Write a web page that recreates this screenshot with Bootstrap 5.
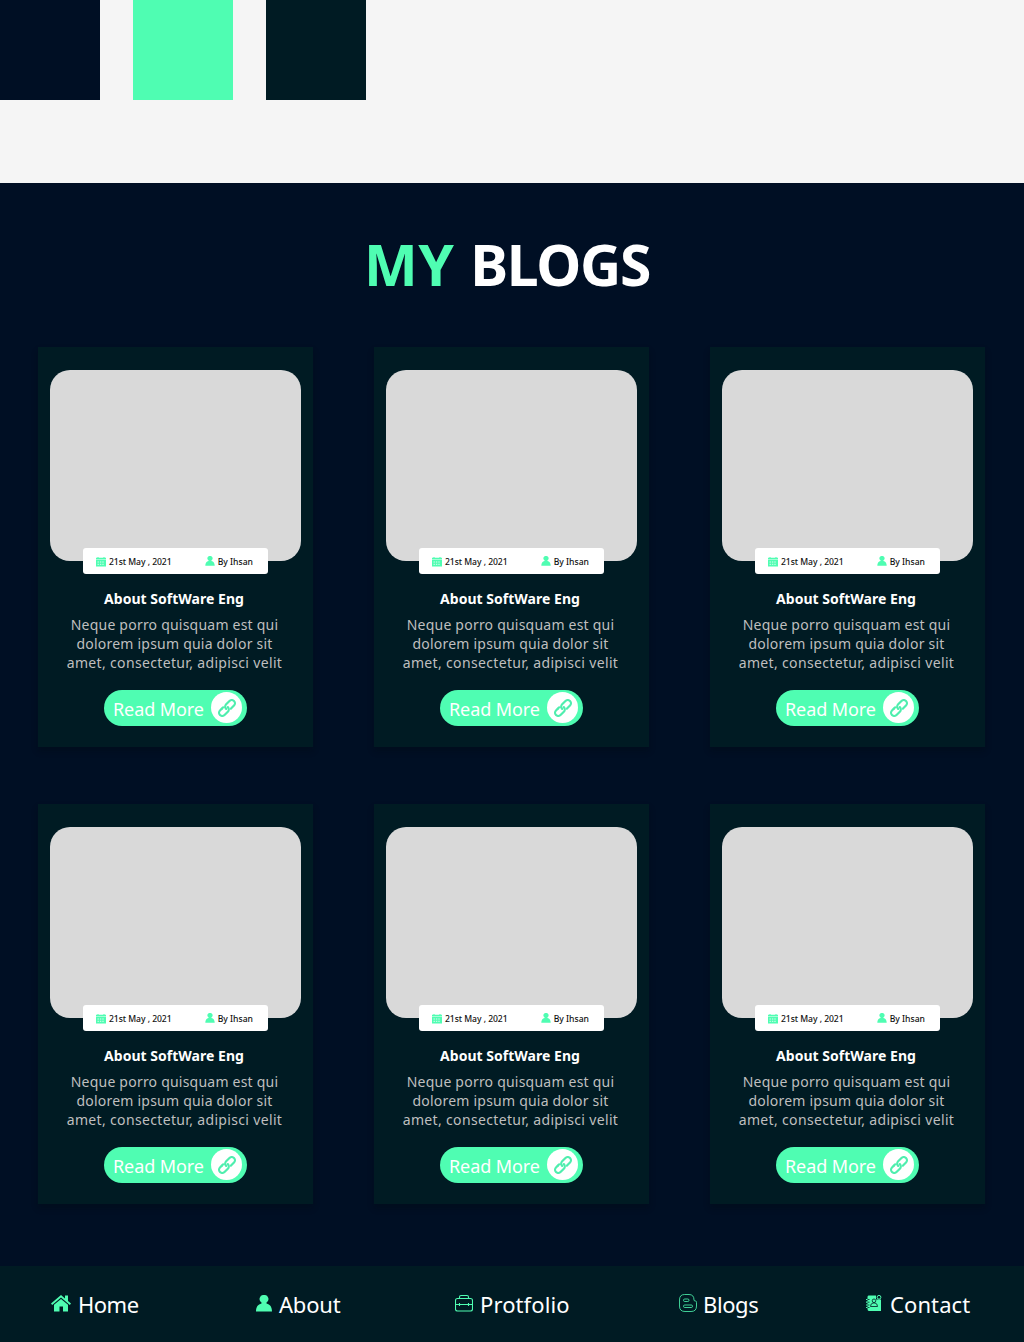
<!DOCTYPE html>
<html lang="en">
<head>
<meta charset="utf-8">
<meta name="viewport" content="width=device-width, initial-scale=1">
<title>My Blogs</title>
<link href="https://cdn.jsdelivr.net/npm/bootstrap@5.3.0/dist/css/bootstrap.min.css" rel="stylesheet">
<style>
:root{--navy:#000f24;--mint:#4ffdb2;--deep:#001b23}
body{background:#f5f5f5;font-family:"Noto Sans","Open Sans",sans-serif;width:1024px;overflow-x:hidden}
.swatches{height:183px;gap:33px}
.swatch{width:100px;height:100px}
.bg-navy{background:var(--navy)}.bg-mint{background:var(--mint)}.bg-deep{background:var(--deep)}
.mint{color:var(--mint);letter-spacing:.7px}
.blogs{height:1083px;padding:0 38px}
.blogs-title{height:164px;padding-top:41px;font-size:57px;line-height:80px;font-weight:700;letter-spacing:-1.300px;margin:0;padding-right:10px;white-space:nowrap}
.blog-grid{display:grid;grid-template-columns:repeat(3,275px);gap:57px 61px}
.blog{height:400px;background:var(--deep);padding-top:23px;box-shadow:0 4px 6px rgba(0,10,16,.3)}
.thumb{width:251px;height:191px;border-radius:20px;background:#d9d9d9}
.meta{width:185px;height:26px;margin-top:-13px;border-radius:3px;background:#fff;color:#111;font-size:8.6px;font-weight:500;padding:2px 15px 0 13px;line-height:24px;position:relative;white-space:nowrap}
.meta svg{width:10px;height:10px;margin-right:3px}
.date{letter-spacing:-.05px}
.meta .icon-up{margin-top:-2px}
.blog-name{font-size:14px;line-height:20px;font-weight:700;color:#fff;margin:15px 0 6px;padding-right:3px;letter-spacing:.02px;white-space:nowrap}
.blog-text{font-size:14px;line-height:19px;color:#bfbfbf;margin:0 0 18px;padding-right:2px;letter-spacing:.34px;white-space:nowrap}
.blog-text .l1{letter-spacing:.22px}
.more{width:143px;height:36px;border-radius:18px;background:var(--mint);color:#fff;font-size:18px;padding:0 5px 0 9px;text-decoration:none;letter-spacing:-.1px;white-space:nowrap}
.more span{line-height:36px;padding-top:2px}
.disc{width:31px;height:31px;border-radius:50%;background:#fff;margin-top:-1px}
.footer-nav{height:76px;font-size:22px;padding-left:51px}
.footer-nav a{color:#fff;text-decoration:none;line-height:30px;white-space:nowrap;gap:7px;flex:none}
.footer-nav svg{flex:none;margin-top:-2px}
.to-home{width:205px;letter-spacing:-.5px}.to-about{width:199px;letter-spacing:-.2px}.to-work{width:224px;letter-spacing:.1px}.to-blogs{width:187px;letter-spacing:-.4px}
.footer-nav .to-blogs{gap:6px}
.footer-nav .to-contact{gap:8px;letter-spacing:.1px}
</style>
</head>
<body>
<svg width="0" height="0" class="position-absolute" aria-hidden="true">
<symbol id="cal" viewBox="0 0 10 10"><path fill="#4ffdb2" d="M0 .8h1.500V0h1v.8h5V0h1v.8H10v1.700H0zM0 3h10v6.500H0z"/><path stroke="#fff" stroke-width=".8" stroke-dasharray="1.400 1" d="M1.500 5h7M1.500 7.300h7"/></symbol>
<symbol id="user" viewBox="0 0 16 17"><path fill="#4ffdb2" d="M8 0a4 4 0 0 1 2.500 7.400v1.100C14 9.300 16 12 16 16.500H0C0 12 2 9.300 5.500 8.500V7.400A4 4 0 0 1 8 0z"/></symbol>
<symbol id="chain" viewBox="0 0 18 18"><g fill="none" stroke="#4feeae" stroke-width="2.200" stroke-linecap="round" transform="rotate(-45 9 9)"><path d="M4.800 5.800H2.300a3.200 3.200 0 0 0 0 6.400h4.700a3.200 3.200 0 0 0 3.200-3.200"/><path d="M13.200 12.200h2.500a3.200 3.200 0 0 0 0-6.400h-4.700A3.200 3.200 0 0 0 7.800 9M4.800 5.800h2M11.200 12.200h2"/></g></symbol>
</svg>
<div class="swatches d-flex"><div class="swatch bg-navy"></div><div class="swatch bg-mint"></div><div class="swatch bg-deep"></div></div>
<main class="blogs bg-navy">
<h1 class="blogs-title text-center text-white"><span class="mint">MY </span>BLOGS</h1>
<div class="blog-grid">
<article class="blog d-flex flex-column align-items-center"><div class="thumb"></div><div class="meta d-flex justify-content-between"><span class="d-flex align-items-center"><svg><use href="#cal"/></svg><span class="date">21st May , 2021</span></span><span class="d-flex align-items-center"><svg class="icon-up"><use href="#user"/></svg><span class="author">By Ihsan</span></span></div><h2 class="blog-name">About SoftWare Eng</h2><p class="blog-text text-center"><span class="l1">Neque porro quisquam est qui</span><br><span class="l1">dolorem ipsum quia dolor sit</span><br>amet, consectetur, adipisci velit</p><a href="#" class="more d-flex align-items-center justify-content-between"><span>Read More</span><i class="disc d-flex align-items-center justify-content-center"><svg width="18" height="18"><use href="#chain"/></svg></i></a></article>
<article class="blog d-flex flex-column align-items-center"><div class="thumb"></div><div class="meta d-flex justify-content-between"><span class="d-flex align-items-center"><svg><use href="#cal"/></svg><span class="date">21st May , 2021</span></span><span class="d-flex align-items-center"><svg class="icon-up"><use href="#user"/></svg><span class="author">By Ihsan</span></span></div><h2 class="blog-name">About SoftWare Eng</h2><p class="blog-text text-center"><span class="l1">Neque porro quisquam est qui</span><br><span class="l1">dolorem ipsum quia dolor sit</span><br>amet, consectetur, adipisci velit</p><a href="#" class="more d-flex align-items-center justify-content-between"><span>Read More</span><i class="disc d-flex align-items-center justify-content-center"><svg width="18" height="18"><use href="#chain"/></svg></i></a></article>
<article class="blog d-flex flex-column align-items-center"><div class="thumb"></div><div class="meta d-flex justify-content-between"><span class="d-flex align-items-center"><svg><use href="#cal"/></svg><span class="date">21st May , 2021</span></span><span class="d-flex align-items-center"><svg class="icon-up"><use href="#user"/></svg><span class="author">By Ihsan</span></span></div><h2 class="blog-name">About SoftWare Eng</h2><p class="blog-text text-center"><span class="l1">Neque porro quisquam est qui</span><br><span class="l1">dolorem ipsum quia dolor sit</span><br>amet, consectetur, adipisci velit</p><a href="#" class="more d-flex align-items-center justify-content-between"><span>Read More</span><i class="disc d-flex align-items-center justify-content-center"><svg width="18" height="18"><use href="#chain"/></svg></i></a></article>
<article class="blog d-flex flex-column align-items-center"><div class="thumb"></div><div class="meta d-flex justify-content-between"><span class="d-flex align-items-center"><svg><use href="#cal"/></svg><span class="date">21st May , 2021</span></span><span class="d-flex align-items-center"><svg class="icon-up"><use href="#user"/></svg><span class="author">By Ihsan</span></span></div><h2 class="blog-name">About SoftWare Eng</h2><p class="blog-text text-center"><span class="l1">Neque porro quisquam est qui</span><br><span class="l1">dolorem ipsum quia dolor sit</span><br>amet, consectetur, adipisci velit</p><a href="#" class="more d-flex align-items-center justify-content-between"><span>Read More</span><i class="disc d-flex align-items-center justify-content-center"><svg width="18" height="18"><use href="#chain"/></svg></i></a></article>
<article class="blog d-flex flex-column align-items-center"><div class="thumb"></div><div class="meta d-flex justify-content-between"><span class="d-flex align-items-center"><svg><use href="#cal"/></svg><span class="date">21st May , 2021</span></span><span class="d-flex align-items-center"><svg class="icon-up"><use href="#user"/></svg><span class="author">By Ihsan</span></span></div><h2 class="blog-name">About SoftWare Eng</h2><p class="blog-text text-center"><span class="l1">Neque porro quisquam est qui</span><br><span class="l1">dolorem ipsum quia dolor sit</span><br>amet, consectetur, adipisci velit</p><a href="#" class="more d-flex align-items-center justify-content-between"><span>Read More</span><i class="disc d-flex align-items-center justify-content-center"><svg width="18" height="18"><use href="#chain"/></svg></i></a></article>
<article class="blog d-flex flex-column align-items-center"><div class="thumb"></div><div class="meta d-flex justify-content-between"><span class="d-flex align-items-center"><svg><use href="#cal"/></svg><span class="date">21st May , 2021</span></span><span class="d-flex align-items-center"><svg class="icon-up"><use href="#user"/></svg><span class="author">By Ihsan</span></span></div><h2 class="blog-name">About SoftWare Eng</h2><p class="blog-text text-center"><span class="l1">Neque porro quisquam est qui</span><br><span class="l1">dolorem ipsum quia dolor sit</span><br>amet, consectetur, adipisci velit</p><a href="#" class="more d-flex align-items-center justify-content-between"><span>Read More</span><i class="disc d-flex align-items-center justify-content-center"><svg width="18" height="18"><use href="#chain"/></svg></i></a></article>
</div>
</main>
<nav class="footer-nav bg-deep d-flex align-items-center">
<a href="#" class="to-home d-flex align-items-center"><svg width="20" height="17" viewBox="0 0 20 17"><path fill="#4ffdb2" d="M10 0l4 3.400V.4h3v5.600l3 2.600-1.200 1.300L10 2.500 1.200 9.900 0 8.600zM10 3.900l7 5.900V16.500h-5v-5H8.500v5H3V9.800z"/></svg><span>Home</span></a>
<a href="#" class="to-about d-flex align-items-center"><svg width="16" height="17"><use href="#user"/></svg><span>About</span></a>
<a href="#" class="to-work d-flex align-items-center"><svg width="18" height="18" viewBox="0 0 18 18"><g fill="none" stroke="#4ffdb2" stroke-width="1.100"><rect x=".5" y="4.500" width="17" height="12.500" rx="2"/><path d="M4.500 4.500V3q0-1.500 1.500-1.500h6q1.500 0 1.500 1.500v1.500M.5 10.500h17M4.500 9v3M13.500 9v3"/></g></svg><span>Protfolio</span></a>
<a href="#" class="to-blogs d-flex align-items-center"><svg width="18" height="18" viewBox="0 0 18 18"><g fill="none" stroke="#4ffdb2" stroke-width=".8"><path d="M5.500.5h4.500q5 0 5 5.500 0 1 1.500 1 1 0 1 1.500V12q0 5.500-5.500 5.500H6Q.5 17.500.5 12V6Q.5.5 5.500.5z"/><rect x="4.500" y="5" width="5.500" height="2.500" rx="1.200"/><rect x="4.500" y="11" width="9" height="2.500" rx="1.200"/></g></svg><span>Blogs</span></a>
<a href="#" class="to-contact d-flex align-items-center"><svg width="16" height="16" viewBox="0 0 16 16"><path fill="#4ffdb2" d="M2.500.5H10v4h5V16h-12q-1.500 0-1.500-2V2Q1.500.5 2.500.5z"/><path fill="none" stroke="#4ffdb2" stroke-width="1.200" d="M0 4.500h2M0 7.200h2M0 10h2M0 12.500h2"/><circle cx="13" cy="2.300" r="1.900" fill="none" stroke="#4ffdb2"/><g fill="none" stroke="#001b23" stroke-width=".8"><circle cx="8" cy="5.800" r="1.800"/><path d="M4.500 11.500q0-3 2.500-3.500h2q2.500.5 2.500 3.500zM1.500 4.500h2M1.500 7.200h2M1.500 10h2M1.500 12.500h2"/></g></svg><span>Contact</span></a>
</nav>
<script src="https://cdn.jsdelivr.net/npm/bootstrap@5.3.0/dist/js/bootstrap.bundle.min.js"></script>
</body>
</html>
